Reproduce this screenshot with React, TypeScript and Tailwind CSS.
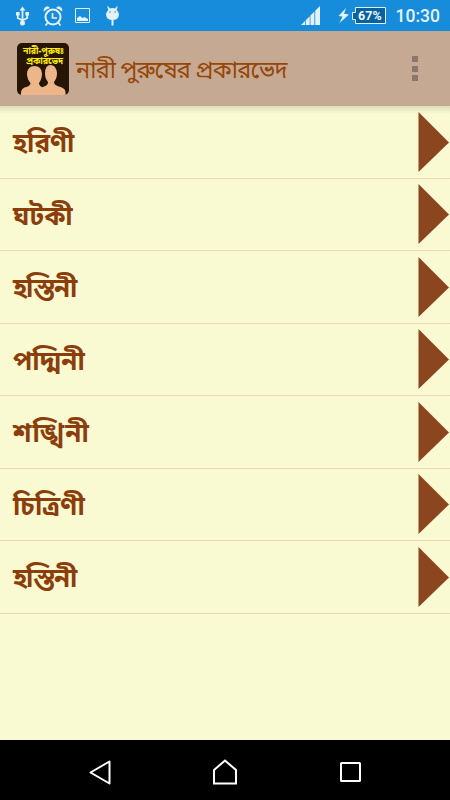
const items = [
  { label: 'হরিণী', className: 'tracking-[-0.2px]' },
  { label: 'ঘটকী', className: 'tracking-[0.2px]' },
  { label: 'হস্তিনী', className: 'tracking-[-1.2px]' },
  { label: 'পদ্মিনী', className: 'tracking-normal' },
  { label: 'শঙ্খিনী', className: 'tracking-[1.1px]' },
  { label: 'চিত্রিণী', className: 'tracking-[0.1px]' },
  { label: 'হস্তিনী', className: 'tracking-[-1.2px]' },
];

function StatusBar() {
  return (
    <div className="flex h-[31px] shrink-0 items-center bg-[#168cdb] text-[#e8f3fc]">
      {/* usb */}
      <svg className="ml-[15px]" width="15" height="20" viewBox="0 0 15 20" fill="none" stroke="#e3f1fb" strokeWidth="1.8">
        <path d="M7.500 3v13M2.800 8v4l4.700 2.500M12.200 8v4l-4.700 2.500" />
        <path d="M7.500 0.500l3 4h-6zM1 6h3.600v3.600H1zM10.400 6H14v3.600h-3.600z" fill="#e3f1fb" stroke="none" />
        <circle cx="7.500" cy="17" r="2.500" fill="#e3f1fb" stroke="none" />
      </svg>
      {/* alarm */}
      <svg className="ml-[13px]" width="20" height="20" viewBox="0 0 20 20" fill="none" stroke="#e3f1fb" strokeWidth="2">
        <circle cx="10" cy="11" r="7.500" />
        <path d="M9.500 7v5H14M4.500 17l-2 2.500M15.500 17l2 2.500" strokeWidth="1.700" />
        <path d="M.8 5.800Q0 1 5 .3L7 2Q3 3 .8 5.800zM19.200 5.800Q20 1 15 .3L13 2q4 1 6.200 3.800z" fill="#e3f1fb" stroke="none" />
      </svg>
      {/* screenshot */}
      <svg className="ml-[12px]" width="15" height="16" viewBox="0 0 15 16">
        <path d="M.5.5h14v14H.5z" fill="none" stroke="#e3f1fb" />
        <path d="M2 13v-3l3-2 2.500 2 2-1 3.500 2v2z" fill="#e3f1fb" />
      </svg>
      {/* android debug */}
      <svg className="ml-[16px]" width="13" height="20" viewBox="0 0 13 20" fill="#e3f1fb">
        <path d="M1.200.6L2 .2l2 2.200q2.500-.8 5 0L11 .2l.8.400L10.600 4Q13 6 13 8.500q-.5 5.500-6.500 5.500T0 8.500Q0 6 2.400 4zM5.500 14h2v5.500h-2z" />
        <circle cx="3.900" cy="6" r=".8" fill="#168cdb" />
        <circle cx="9.100" cy="6" r=".8" fill="#168cdb" />
      </svg>
      <svg className="ml-auto" width="19" height="19" viewBox="0 0 19 19" fill="#e3f1fb">
        <path d="M0 19l4-4v4zM4.700 14.300L8.700 10.300V19h-4zM9.400 9.600l4-4V19h-4zM14.200 4.800L19 0v19h-4.800z" />
      </svg>
      <svg className="ml-[18px]" width="11" height="15" viewBox="0 0 11 15" fill="#e3f1fb">
        <path d="M8 0L0.500 8l4 .5L1.500 15 11 6.500l-5-.7z" />
      </svg>
      <div className="relative ml-[3px] flex h-[17px] w-[34px] items-center">
        <svg className="absolute inset-0" width="34" height="17" viewBox="0 0 34 17">
          <path d="M3.500.5h30v16h-30v-4h-3v-7h3z" fill="#0962a0" stroke="#e3f1fb" />
        </svg>
        <span className="relative top-[0.500px] ml-[6.500px] font-[Roboto,sans-serif] text-[12.500px] leading-none font-bold text-[#eef7fd]">67%</span>
      </div>
      <span className="relative top-px mr-[10px] ml-[10px] font-[Roboto,sans-serif] text-[17.500px] leading-none font-medium">10:30</span>
    </div>
  );
}

function AppIcon() {
  return (
    <svg width="52" height="52" viewBox="0 0 52 52" className="shrink-0">
      <rect width="52" height="52" rx="5" fill="#261505" />
      <g fill="#fff000" fontFamily="'Noto Sans Bengali', 'Noto Sans', sans-serif" fontWeight="700" fontSize="10">
        <text x="6" y="11" textLength="41" lengthAdjust="spacingAndGlyphs">নারী-পুরুষঃ</text>
        <text x="9" y="21" textLength="37" lengthAdjust="spacingAndGlyphs">প্রকারভেদ</text>
      </g>
      <g fill="#edb68a">
        <path d="M4 52v-2q0-4 3.500-5.500 6-1.500 6-4.500-3.500-4-3.500-9Q10.500 23 17.500 23t7.500 7.500q0 5.500-3 9.500 0 3 4 4.500V52z" />
        <path d="M24 52v-6q1-2 4-3 3-1 3-4-3-3.500-3-8.500Q28 22 33.500 22t6.500 8q0 5.500-3 9 0 3 5 4.500 6.500 1.500 6.500 5.500v3z" />
      </g>
    </svg>
  );
}

export default function App() {
  return (
    <div className="flex h-[800px] w-[450px] flex-col overflow-hidden bg-[#f9f9d2] font-['Noto_Sans_Bengali','Noto_Sans',sans-serif]">
      <StatusBar />

      <header className="flex h-[75px] shrink-0 items-center bg-[#c6a993] pl-[17px] text-[#964606]">
        <AppIcon />
        <h1 className="ml-[7px] pt-[8px] text-[23.500px] leading-none tracking-[-0.75px] whitespace-nowrap">নারী পুরুষের প্রকারভেদ</h1>
        <div className="mr-[32px] ml-auto flex flex-col gap-[3.500px]">
          <span className="size-[6px] bg-[#8b776b]" />
          <span className="size-[6px] bg-[#8b776b]" />
          <span className="size-[6px] bg-[#8b776b]" />
        </div>
      </header>

      <main className="flex-1 bg-linear-to-b from-[#dedebb] to-[#f9f9d2] to-[8px]">
        {items.map((item, i) => (
          <div key={i} className="flex h-[72.500px] items-center justify-between border-b border-[#efd6b8] pl-[13px]">
            <span className={`pt-[9px] text-[26px] leading-none font-bold text-[#8b3e0c] ${item.className}`}>{item.label}</span>
            <svg width="32" height="60" viewBox="0 0 32 60">
              <path d="M.5 0l30.500 30.500L.5 60z" fill="#8b451f" />
            </svg>
          </div>
        ))}
      </main>

      <nav className="flex h-[60px] shrink-0 items-center bg-black pt-[4px]">
        <svg className="ml-[89px]" width="23" height="25" viewBox="0 0 23 25" fill="none" stroke="#fff" strokeWidth="2" strokeLinejoin="round">
          <path d="M1.500 12.500l19-11v22z" />
        </svg>
        <svg className="ml-[101px]" width="24" height="26" viewBox="0 0 24 26" fill="none" stroke="#fff" strokeWidth="2">
          <path d="M1 11L12 1.500 23 11v13.500H1z" />
        </svg>
        <svg className="ml-[103px]" width="21" height="21" viewBox="0 0 21 21" fill="none" stroke="#fff" strokeWidth="2">
          <rect x="1" y="1" width="19" height="18" rx=".5" />
        </svg>
      </nav>
    </div>
  );
}
